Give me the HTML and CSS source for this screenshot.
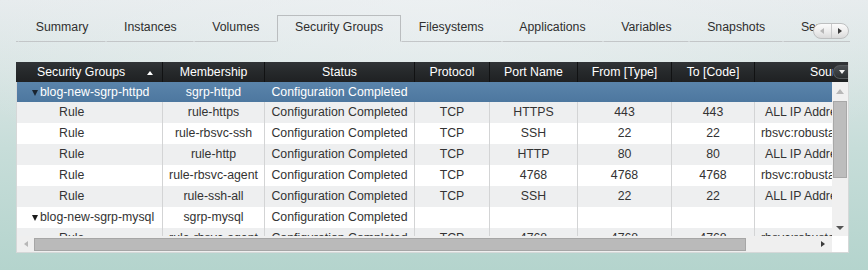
FILE: index.html
```html
<!DOCTYPE html>
<html>
<head>
<meta charset="utf-8">
<link rel="stylesheet" href="styles.css">
</head>
<body>
<div class="page">
  <div class="tabbar">
    <div class="tabs">
      <div class="tab">Summary</div>
      <div class="tab">Instances</div>
      <div class="tab">Volumes</div>
      <div class="tab tab-active">Security Groups</div>
      <div class="tab">Filesystems</div>
      <div class="tab">Applications</div>
      <div class="tab">Variables</div>
      <div class="tab">Snapshots</div>
      <div class="tab">Servers</div>
    </div>
    <div class="tab-scroller">
      <span class="ts-half ts-left"><i class="arr-l dim"></i></span>
      <span class="ts-half"><i class="arr-r"></i></span>
    </div>
  </div>

  <div class="grid">
    <div class="ghead">
      <div class="hc c1 hc-sort"><span>Security Groups</span><i class="sort-up"></i></div>
      <div class="hc c2">Membership</div>
      <div class="hc c3">Status</div>
      <div class="hc c4">Protocol</div>
      <div class="hc c5">Port Name</div>
      <div class="hc c6">From [Type]</div>
      <div class="hc c7">To [Code]</div>
      <div class="hc hc-src">Source</div>
      <div class="hmenu"><i class="arr-dw"></i></div>
    </div>

    <div class="gmid">
      <div class="rows">
        <div class="row sel">
          <div class="c c1 grp"><i class="tri tri-w"></i>blog-new-sgrp-httpd</div>
          <div class="c c2">sgrp-httpd</div>
          <div class="c c3">Configuration Completed</div>
          <div class="c c4"></div>
          <div class="c c5"></div>
          <div class="c c6"></div>
          <div class="c c7"></div>
          <div class="c c8"></div>
        </div>
        <div class="row alt">
          <div class="c c1 rule">Rule</div>
          <div class="c c2">rule-https</div>
          <div class="c c3">Configuration Completed</div>
          <div class="c c4">TCP</div>
          <div class="c c5">HTTPS</div>
          <div class="c c6">443</div>
          <div class="c c7">443</div>
          <div class="c c8 src-all">ALL IP Addresses</div>
        </div>
        <div class="row">
          <div class="c c1 rule">Rule</div>
          <div class="c c2">rule-rbsvc-ssh</div>
          <div class="c c3">Configuration Completed</div>
          <div class="c c4">TCP</div>
          <div class="c c5">SSH</div>
          <div class="c c6">22</div>
          <div class="c c7">22</div>
          <div class="c c8">rbsvc:robustack</div>
        </div>
        <div class="row alt">
          <div class="c c1 rule">Rule</div>
          <div class="c c2">rule-http</div>
          <div class="c c3">Configuration Completed</div>
          <div class="c c4">TCP</div>
          <div class="c c5">HTTP</div>
          <div class="c c6">80</div>
          <div class="c c7">80</div>
          <div class="c c8 src-all">ALL IP Addresses</div>
        </div>
        <div class="row">
          <div class="c c1 rule">Rule</div>
          <div class="c c2">rule-rbsvc-agent</div>
          <div class="c c3">Configuration Completed</div>
          <div class="c c4">TCP</div>
          <div class="c c5">4768</div>
          <div class="c c6">4768</div>
          <div class="c c7">4768</div>
          <div class="c c8">rbsvc:robustack</div>
        </div>
        <div class="row alt">
          <div class="c c1 rule">Rule</div>
          <div class="c c2">rule-ssh-all</div>
          <div class="c c3">Configuration Completed</div>
          <div class="c c4">TCP</div>
          <div class="c c5">SSH</div>
          <div class="c c6">22</div>
          <div class="c c7">22</div>
          <div class="c c8 src-all">ALL IP Addresses</div>
        </div>
        <div class="row">
          <div class="c c1 grp"><i class="tri"></i>blog-new-sgrp-mysql</div>
          <div class="c c2">sgrp-mysql</div>
          <div class="c c3">Configuration Completed</div>
          <div class="c c4"></div>
          <div class="c c5"></div>
          <div class="c c6"></div>
          <div class="c c7"></div>
          <div class="c c8"></div>
        </div>
        <div class="row alt">
          <div class="c c1 rule">Rule</div>
          <div class="c c2">rule-rbsvc-agent</div>
          <div class="c c3">Configuration Completed</div>
          <div class="c c4">TCP</div>
          <div class="c c5">4768</div>
          <div class="c c6">4768</div>
          <div class="c c7">4768</div>
          <div class="c c8">rbsvc:robustack</div>
        </div>
      </div>
      <div class="vscroll">
        <div class="vs-btn vs-btn-t"><i class="arr-u dim"></i></div>
        <div class="vs-thumb"></div>
        <div class="vs-space"></div>
        <div class="vs-btn"><i class="arr-d"></i></div>
      </div>
    </div>

    <div class="hscroll">
      <div class="hs-btn"><i class="arr-l dim"></i></div>
      <div class="hs-thumb"></div>
      <div class="hs-space"></div>
      <div class="hs-btn hs-btn-r"><i class="arr-r"></i></div>
      <div class="hs-corner"></div>
    </div>
  </div>
</div>
</body>
</html>
```

FILE: styles.css
```css
html, body {
  margin: 0;
  padding: 0;
}
body {
  width: 868px;
  height: 270px;
  overflow: hidden;
  font-family: "Liberation Sans", Arial, sans-serif;
  font-size: 12.3px;
  color: #333;
  background:
    radial-gradient(ellipse 60% 80% at 50% 0%, rgba(240, 243, 245, 0.6), rgba(240, 243, 245, 0) 100%),
    linear-gradient(180deg, #e6ebed 0%, #d9e5e4 25%, #c7ddd9 55%, #b4d4cd 100%);
}
.page {
  padding: 15px 19px 0 16px;
}

/* ---------- tabs ---------- */
.tabbar {
  position: relative;
  width: 834px;
}
.tabs {
  display: flex;
  overflow: hidden;
  white-space: nowrap;
}
.tabs::before {
  content: "";
  flex: 0 0 2px;
  border-bottom: 1px solid #c3c6c8;
}
.tab {
  flex: 0 0 auto;
  box-sizing: border-box;
  height: 27px;
  padding: 0 16.8px 2px;
  line-height: 23px;
  border: 1px solid transparent;
  border-bottom: 1px solid #c3c6c8;
  color: #2f2f2f;
}
.tab-active {
  border-color: #babdbf;
  border-bottom-color: transparent;
}
.tab-scroller {
  position: absolute;
  left: 797px;
  top: 8px;
  display: flex;
  width: 36px;
  height: 16px;
  box-sizing: border-box;
  border: 1px solid #bdbfc0;
  border-radius: 8px;
  background: linear-gradient(180deg, #fbfbfb 0%, #ececec 55%, #dadada 100%);
  overflow: hidden;
}
.ts-half {
  flex: 1;
  display: flex;
  align-items: center;
  justify-content: center;
}
.ts-left {
  border-right: 1px solid #c9cacb;
}

/* ---------- arrows ---------- */
.arr-l, .arr-r, .arr-u, .arr-d, .arr-dw, .sort-up {
  display: block;
  width: 0;
  height: 0;
}
.arr-l {
  border-top: 3.5px solid transparent;
  border-bottom: 3.5px solid transparent;
  border-right: 4px solid #3a3a3a;
}
.arr-r {
  border-top: 3.5px solid transparent;
  border-bottom: 3.5px solid transparent;
  border-left: 4px solid #3a3a3a;
}
.arr-u {
  border-left: 4px solid transparent;
  border-right: 4px solid transparent;
  border-bottom: 5px solid #555;
}
.arr-d {
  border-left: 4px solid transparent;
  border-right: 4px solid transparent;
  border-top: 4px solid #555;
}
.arr-l.dim { border-right-color: #b7b7b7; }
.arr-u.dim { border-bottom-color: #b7b7b7; }
.arr-dw {
  border-left: 3.5px solid transparent;
  border-right: 3.5px solid transparent;
  border-top: 4px solid #f2f2f2;
}
.sort-up {
  border-left: 3px solid transparent;
  border-right: 3px solid transparent;
  border-bottom: 4px solid #fff;
}

/* ---------- grid ---------- */
.grid {
  margin-top: 20px;
  width: 833px;
  box-sizing: border-box;
  border: 1px solid #d5d8d8;
  border-top: 0;
  background: #fff;
}
.ghead {
  display: flex;
  height: 20px;
  margin-left: -1px;
  padding-left: 1px;
  background: linear-gradient(180deg, #313437 0%, #26292b 50%, #1f2123 100%);
  color: #fff;
}
.hc {
  box-sizing: border-box;
  height: 20px;
  padding-top: 1px;
  line-height: 19px;
  text-align: center;
  white-space: nowrap;
  overflow: hidden;
  border-right: 1px solid #111213;
}
.hc-sort {
  display: flex;
  align-items: center;
  justify-content: space-between;
  text-align: left;
  padding-left: 20px;
  padding-right: 9px;
}
.hc-sort span { line-height: 19px; }
.hc.hc-src {
  width: 78px;
  text-align: left;
  padding-left: 55px;
  border-right: 0;
}
.hmenu {
  flex: 0 0 15px;
  height: 14px;
  margin-top: 3px;
  box-sizing: border-box;
  border: 1px solid #55595c;
  border-right: 0;
  border-radius: 7px 0 0 7px;
  background: linear-gradient(180deg, #4a4e52, #2c2f31);
  display: flex;
  align-items: center;
  justify-content: center;
  padding-left: 1px;
}

.c1 { width: 146px; }
.c2 { width: 102px; }
.c3 { width: 150px; }
.c4 { width: 75px; }
.c5 { width: 88px; }
.c6 { width: 94px; }
.c7 { width: 83px; }
.c8 { width: 77px; }
.hc, .c { flex: 0 0 auto; }

.gmid {
  display: flex;
  height: 154px;
}
.rows {
  width: 815px;
  overflow: hidden;
}
.row {
  display: flex;
  height: 21px;
  line-height: 21px;
  background: #fff;
}
.row.alt {
  background: #eeeff0;
}
.row.sel {
  height: 20px;
  line-height: 20px;
  background: linear-gradient(180deg, #5a84ab 0%, #4d779f 100%);
  color: #fff;
}
.c {
  box-sizing: border-box;
  text-align: center;
  white-space: nowrap;
  overflow: hidden;
  border-right: 1px solid #d3d4d5;
}
.row.sel .c {
  border-right-color: transparent;
}
.c.c8 {
  border-right: 0;
  text-align: left;
  padding-left: 6px;
}
.c.c8.src-all {
  padding-left: 10px;
}
.c1.rule {
  text-align: left;
  padding-left: 42px;
}
.c1.grp {
  text-align: left;
  padding-left: 15px;
}
.tri {
  display: inline-block;
  width: 0;
  height: 0;
  border-left: 3.5px solid transparent;
  border-right: 3.5px solid transparent;
  border-top: 6px solid #1a1a1a;
  margin-right: 2px;
}
.tri-w {
  border-top-color: #1a2430;
}

.vscroll {
  width: 16px;
  display: flex;
  flex-direction: column;
  align-items: center;
  background: #f0f0f0;
}
.vs-btn {
  height: 17px;
  width: 16px;
  display: flex;
  align-items: center;
  justify-content: center;
}
.vs-btn-t {
  align-items: flex-start;
  padding-top: 7px;
  box-sizing: border-box;
}
.vs-thumb {
  margin-top: 2px;
  width: 14px;
  height: 77px;
  box-sizing: border-box;
  background: #bdbdbd;
  border: 1px solid #a8a8a8;
}
.vs-space { flex: 1; }

.hscroll {
  display: flex;
  height: 16px;
  background: #efefef;
}
.hs-btn {
  flex: 0 0 17px;
  display: flex;
  align-items: center;
  justify-content: center;
}
.hs-btn-r {
  flex-basis: 15px;
  justify-content: flex-start;
  padding-left: 4px;
  box-sizing: border-box;
}
.hs-thumb {
  margin-top: 2px;
  width: 712px;
  height: 13px;
  box-sizing: border-box;
  background: #bababa;
  border: 1px solid #a6a6a6;
}
.hs-space { flex: 1; }
.hs-corner {
  flex: 0 0 16px;
  background: #fff;
}
```
